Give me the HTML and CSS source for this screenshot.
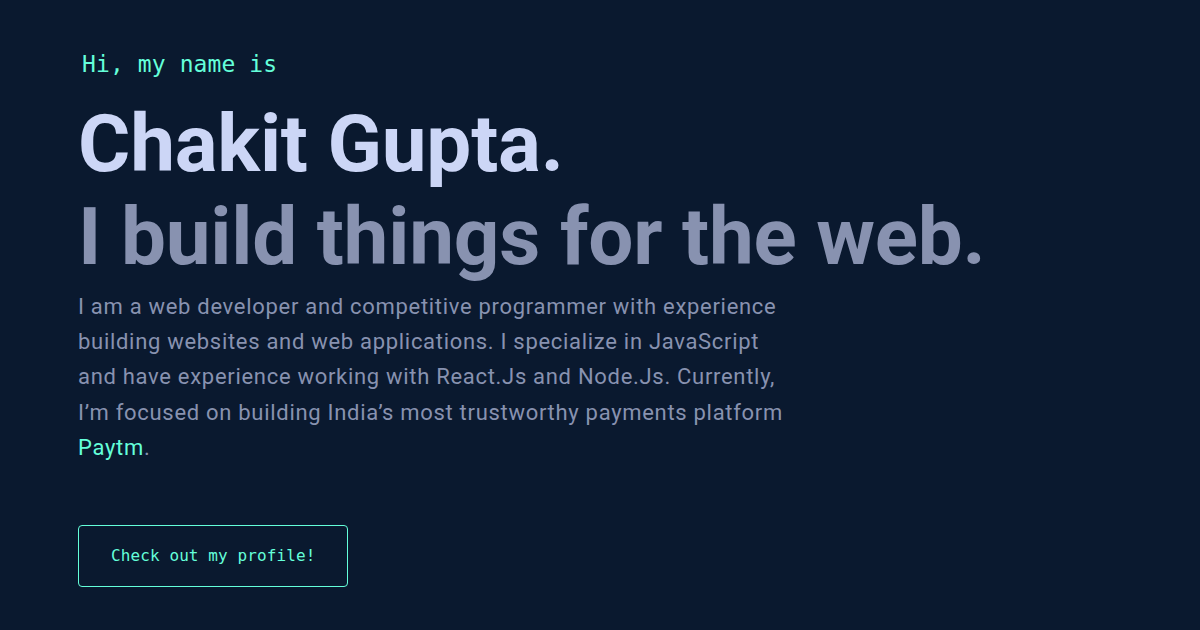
FILE: index.html
```html
<!DOCTYPE html>
<html lang="en">
<head>
<meta charset="utf-8">
<title>Chakit Gupta</title>
<link rel="stylesheet" href="styles.css">
</head>
<body>
<main class="hero">
  <h1 class="hero-intro">Hi, my name is</h1>
  <h2 class="hero-name">Chakit Gupta.</h2>
  <h3 class="hero-tagline">I build things for the web.</h3>
  <p class="hero-text">I am a web developer and competitive programmer with experience<br>building websites and web applications. I specialize in JavaScript<br>and have experience working with React.Js and Node.Js. Currently,<br>I’m focused on building India’s most trustworthy payments platform<br><a class="hero-link" href="#">Paytm</a>.</p>
  <a class="hero-button" href="#">Check out my profile!</a>
</main>
</body>
</html>
```

FILE: styles.css
```css
html, body {
  margin: 0;
  padding: 0;
  background: #0a192f;
  width: 1200px;
  height: 630px;
  overflow: hidden;
}

.hero {
  display: flex;
  flex-direction: column;
  align-items: flex-start;
  padding: 52px 0 0 78px;
  font-family: Roboto, "Noto Sans", sans-serif;
}

.hero-intro {
  margin: 0 0 0 4px;
  font-family: "DejaVu Sans Mono", "Liberation Mono", monospace;
  font-size: 23px;
  font-weight: 400;
  line-height: 25px;
  letter-spacing: 0.1px;
  color: #64ffda;
}

.hero-name,
.hero-tagline {
  margin: 0;
  font-size: 80px;
  font-weight: 700;
  line-height: 88px;
  letter-spacing: -0.2px;
}

.hero-name {
  margin-top: 23px;
  color: #ccd6f6;
}

.hero-tagline {
  margin-top: 5px;
  color: #8892b0;
}

.hero-text {
  margin: 8px 0 0;
  max-width: 800px;
  font-size: 22px;
  line-height: 35.2px;
  letter-spacing: 0.7px;
  color: #8892b0;
}

.hero-link {
  color: #64ffda;
  text-decoration: none;
}

.hero-button {
  margin-top: 60px;
  padding: 22px 32px;
  border: 1px solid #64ffda;
  border-radius: 4px;
  font-family: "DejaVu Sans Mono", "Liberation Mono", monospace;
  font-size: 16px;
  line-height: 16px;
  letter-spacing: 0.1px;
  color: #64ffda;
  text-decoration: none;
}
```
